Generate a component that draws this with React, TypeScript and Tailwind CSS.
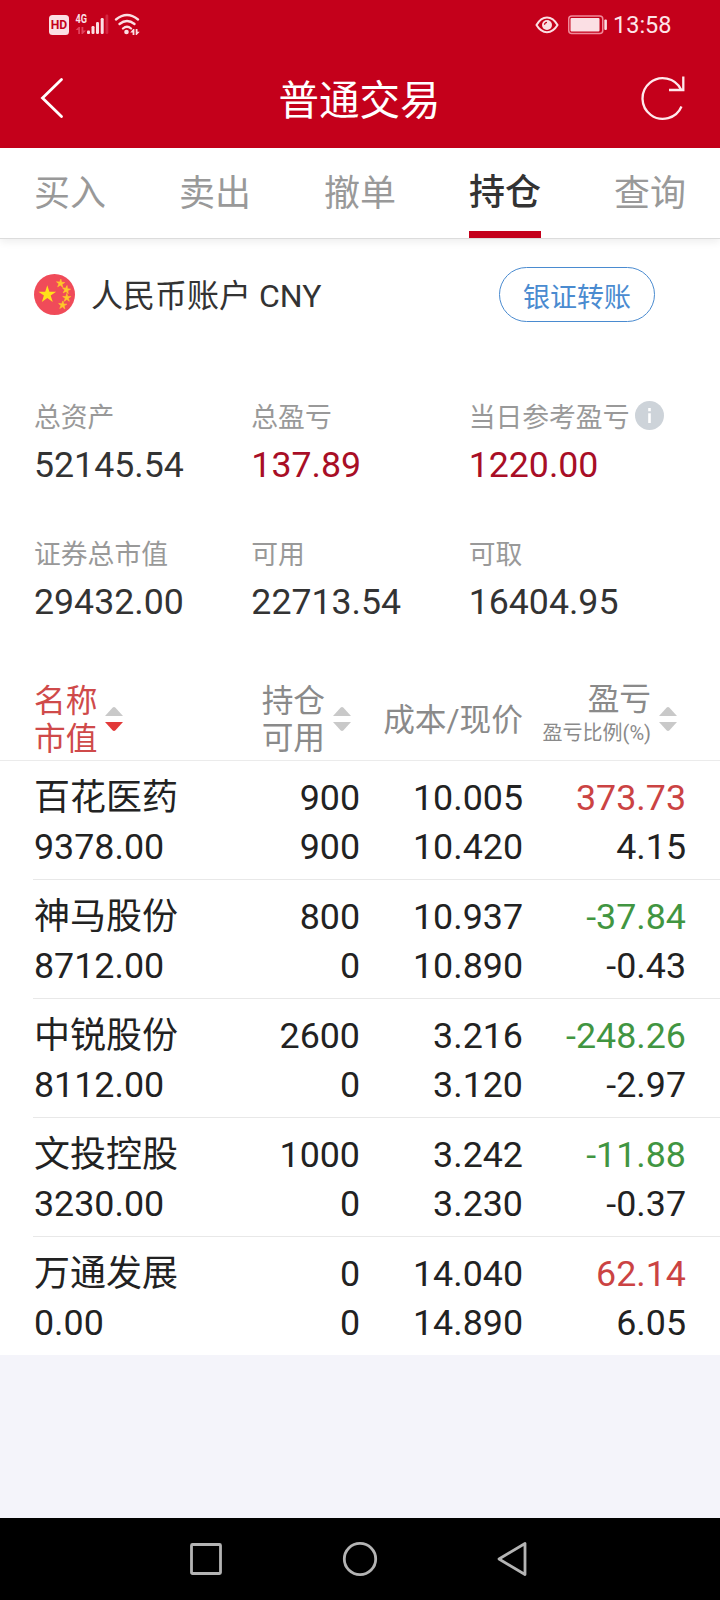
import React from "react";

type Sort = "none" | "desc";

const TABS = ["买入", "卖出", "撤单", "持仓", "查询"];

const SUMMARY = [
  { label: "总资产", value: "52145.54" },
  { label: "总盈亏", value: "137.89", red: true },
  { label: "当日参考盈亏", value: "1220.00", red: true, info: true },
  { label: "证券总市值", value: "29432.00" },
  { label: "可用", value: "22713.54" },
  { label: "可取", value: "16404.95" },
];

const HOLDINGS = [
  { name: "百花医药", market: "9378.00", held: "900", usable: "900", cost: "10.005", price: "10.420", profit: "373.73", ratio: "4.15" },
  { name: "神马股份", market: "8712.00", held: "800", usable: "0", cost: "10.937", price: "10.890", profit: "-37.84", ratio: "-0.43" },
  { name: "中锐股份", market: "8112.00", held: "2600", usable: "0", cost: "3.216", price: "3.120", profit: "-248.26", ratio: "-2.97" },
  { name: "文投控股", market: "3230.00", held: "1000", usable: "0", cost: "3.242", price: "3.230", profit: "-11.88", ratio: "-0.37" },
  { name: "万通发展", market: "0.00", held: "0", usable: "0", cost: "14.040", price: "14.890", profit: "62.14", ratio: "6.05" },
];

const COLUMNS = "grid grid-cols-[166px_160px_163px_163px] px-[34px]";

function StatusBar() {
  return (
    <div className="flex h-[48px] items-center pr-[49px] pl-[49px] text-[#fde4e8]">
      <svg width="92" height="24" viewBox="0 0 92 24" className="block">
        <rect x="0" y="3" width="20" height="20" rx="3.5" fill="#fbdfe4" />
        <text x="10" y="17.3" textAnchor="middle" fontSize="12.5" fontWeight="700" fill="#c4001b" textLength="16.500" lengthAdjust="spacingAndGlyphs" className="font-['Roboto',sans-serif]">HD</text>
        <text x="26.5" y="11" fontSize="12.500" fontWeight="700" fill="#fbdfe4" textLength="11.5" lengthAdjust="spacingAndGlyphs" className="font-['Roboto',sans-serif]">4G</text>
        <g fill="#e0405c">
          <path d="M29.200 15.500v6.500h1.800v-7h-1.400l-3 3h2.600zM32.500 15v7h1.200l3.300-3.400h-2.700v-3.600z" />
          <rect x="56.500" y="2.500" width="2.800" height="19.500" rx="1.200" opacity=".6" />
        </g>
        <g fill="#fbdfe4">
          <rect x="38" y="18.500" width="3" height="3.500" rx="1" />
          <rect x="42.500" y="14" width="3" height="8" rx="1.200" />
          <rect x="47" y="10" width="3" height="12" rx="1.200" />
          <rect x="51.700" y="6" width="3" height="16" rx="1.200" />
        </g>
        <g fill="none" stroke="#fbdfe4" strokeWidth="2.300" strokeLinecap="round">
          <path d="M67 7.500q11-9 22 0M70.500 12q7.500-6 15 0M74 16.500q4-3.500 8 0" />
        </g>
        <circle cx="77.500" cy="20" r="2.300" fill="#fbdfe4" />
        <path d="M85.400 17v6h-1.800v-2.500h-2.400l3-3.500zM86.700 17v6h1l3-3.200h-2.200V17z" fill="#fbdfe4" />
      </svg>
      <div className="flex-1" />
      <svg width="24" height="20" viewBox="0 0 24 20" className="mt-[2px] block">
        <path d="M1.500 10C7-.1 17-.1 22.500 10 17 19.500 7 19.500 1.500 10z" fill="none" stroke="#fbdfe4" strokeWidth="2" />
        <circle cx="12" cy="10" r="5" fill="#fbdfe4" />
        <path d="M9.500 9.800q.1-2.300 2.500-2.500" fill="none" stroke="#c4001b" strokeWidth="1.200" />
      </svg>
      <svg width="40" height="20" viewBox="0 0 40 20" className="mt-[1px] ml-[9px] block">
        <rect x="0.750" y="1" width="34" height="17.500" rx="3" fill="none" stroke="#f08a9a" strokeWidth="1.500" />
        <rect x="2.500" y="3" width="29" height="13.500" rx="1" fill="#fbdfe4" />
        <rect x="36.300" y="4.500" width="2.600" height="10.500" rx="1" fill="#fbdfe4" />
      </svg>
      <span className="mt-[2px] ml-[5px] w-[58px] text-[23.500px] leading-[30px]">13:58</span>
    </div>
  );
}

function Flag() {
  const star = "0,-1 .2245,-.309 .9511,-.309 .3633,.118 .5878,.809 0,.382 -.5878,.809 -.3633,.118 -.9511,-.309 -.2245,-.309";
  return (
    <svg width="41" height="41" viewBox="0 0 41 41" className="block">
      <circle cx="20.500" cy="20.500" r="20.500" fill="#f04b59" />
      <g fill="#ffe11a">
        <polygon points={star} transform="translate(13.300 20.500) scale(9.300)" />
        <g fill="#fdc82a" stroke="#fdc82a" strokeWidth=".15">
          <polygon points={star} transform="translate(26.500 9.500) rotate(5) scale(4.300)" />
          <polygon points={star} transform="translate(32.300 15.800) rotate(10) scale(4.300)" />
          <polygon points={star} transform="translate(32.800 23.800) scale(4.300)" />
          <polygon points={star} transform="translate(28.600 31.200) rotate(5) scale(4.300)" />
        </g>
      </g>
    </svg>
  );
}

function SortArrows({ sort = "none" }: { sort?: Sort }) {
  return (
    <svg width="18" height="24" viewBox="0 0 18 24" className="block shrink-0">
      <path d="M0 9L7.500 .8q1.500-1.400 3 0L18 9z" fill="#c9c9c9" />
      <path d="M0 15L7.500 23.200q1.500 1.400 3 0L18 15z" fill={sort === "desc" ? "#e23a3a" : "#c9c9c9"} />
    </svg>
  );
}

export default function App() {
  return (
    <div className="flex h-[1600px] w-[720px] flex-col overflow-hidden bg-[#f4f4fa] font-['Roboto','Noto_Sans_CJK_SC',sans-serif] text-[#333]">
      <header className="h-[148px] shrink-0 bg-[#c4001b] text-white">
        <StatusBar />
        <div className="flex h-[100px] items-center pr-[34px] pl-[40px]">
          <svg width="42" height="42" viewBox="0 0 42 42" fill="none" stroke="white" strokeWidth="2.800" strokeLinecap="round" className="block">
            <path d="M21.500 2.500L2.500 21l19 18.500" />
          </svg>
          <h1 className="flex-1 pt-[6px] text-center text-[40.500px] leading-[60px]">
            <span className="mr-[3px]">普通交易</span>
          </h1>
          <svg width="46" height="46" viewBox="0 0 46 46" fill="none" stroke="#ffe9ed" strokeWidth="2.300" className="block">
            <path d="M41.500 31.500A20.300 20.300 0 1 1 41 14.500" />
            <path d="M43.300 1.500V15H29" />
          </svg>
        </div>
      </header>

      <nav className="z-10 flex h-[91px] shrink-0 justify-between border-b border-[#dcdcdc] bg-white px-[34px] text-[36px] text-[#999] shadow-[0_3px_8px_rgba(0,0,0,0.07)]">
        {TABS.map((tab) => (
          <div
            key={tab}
            className={
              tab === "持仓"
                ? "h-[90px] border-b-[7px] border-[#c4001b] font-medium leading-[90px] text-[#333]"
                : "leading-[92px]"
            }
          >
            {tab}
          </div>
        ))}
      </nav>

      <main className="shrink-0 bg-white">
        <section className="flex h-[110px] items-center pr-[65px] pl-[34px]">
          <Flag />
          <span className="ml-[16px] pt-[4px] text-[32px] leading-[48px]">人民币账户 CNY</span>
          <button className="ml-auto h-[55px] w-[156px] rounded-full border border-[#4a8bd0] pt-[4px] text-[27px] leading-[53px] text-[#4a8bd0]">
            银证转账
          </button>
        </section>

        <section className="grid h-[319px] grid-cols-3 content-start px-[34px] pt-[46px]">
          {SUMMARY.map((item) => (
            <div key={item.label} className="h-[137px]">
              <div className="flex h-[40px] items-center text-[26.800px] leading-[40px] whitespace-nowrap text-[#999]">
                <span className="pt-[5px]">{item.label}</span>
                {item.info && (
                  <svg width="29" height="29" viewBox="0 0 29 29" className="ml-[6px] block">
                    <circle cx="14.500" cy="14.500" r="14.500" fill="#cdd3d9" />
                    <path d="M14.500 7v3.200M14.500 12.300v9.700" stroke="white" strokeWidth="2.600" />
                  </svg>
                )}
              </div>
              <div className={item.red ? "pt-[6px] text-[35.700px] leading-[48px] text-[#a80e26]" : "pt-[6px] text-[35.700px] leading-[48px]"}>
                {item.value}
              </div>
            </div>
          ))}
        </section>

        <section className={`${COLUMNS} h-[93px] border-b border-[#ebebeb] text-[31.700px] text-[#8a8a8a]`}>
          <div className="flex h-[101px] items-center">
            <div className="pt-[4px] leading-[38px] text-[#cf4a4a]">
              名称
              <br />
              市值
            </div>
            <div className="ml-[8px]">
              <SortArrows sort="desc" />
            </div>
          </div>
          <div className="flex h-[101px] items-center justify-end gap-[8px] pr-[9px]">
            <div className="pt-[3px] text-right leading-[37px]">
              持仓
              <br />
              可用
            </div>
            <SortArrows />
          </div>
          <div className="h-[105px] text-right leading-[105px] whitespace-nowrap">成本/现价</div>
          <div className="flex h-[101px] items-center justify-end gap-[8px] pr-[9px]">
            <div className="pb-[10px] text-right whitespace-nowrap">
              <div className="leading-[38px]">盈亏</div>
              <div className="text-[20px] leading-[28px]">盈亏比例(%)</div>
            </div>
            <SortArrows />
          </div>
        </section>

        {HOLDINGS.map((row, i) => (
          <section key={row.name}>
            <div className={`${COLUMNS} h-[118px] pt-[13px] text-[35.800px] leading-[49px] text-[#222]`}>
              <div>
                <div className="text-[36px]">{row.name}</div>
                <div>{row.market}</div>
              </div>
              <div className="text-right">
                <div>{row.held}</div>
                <div>{row.usable}</div>
              </div>
              <div className="text-right">
                <div>{row.cost}</div>
                <div>{row.price}</div>
              </div>
              <div className="text-right">
                <div className={row.profit.startsWith("-") ? "text-[#419541]" : "text-[#cb4343]"}>{row.profit}</div>
                <div>{row.ratio}</div>
              </div>
            </div>
            {i < HOLDINGS.length - 1 && <div className="ml-[33px] h-px bg-[#e8e8e8]" />}
          </section>
        ))}
      </main>

      <footer className="mt-auto flex h-[82px] shrink-0 items-center justify-center gap-[119px] bg-black">
        <svg width="34" height="36" viewBox="0 0 34 36" fill="none" stroke="#b4b4b4" strokeWidth="2.800">
          <rect x="2.500" y="3.500" width="29" height="29" rx="1" />
        </svg>
        <svg width="36" height="36" viewBox="0 0 36 36" fill="none" stroke="#b4b4b4" strokeWidth="2.800">
          <circle cx="18" cy="18" r="15.700" />
        </svg>
        <svg width="34" height="36" viewBox="0 0 34 36" fill="none" stroke="#b4b4b4" strokeWidth="2.800" strokeLinejoin="round">
          <path d="M28 2.500v31L2 18z" />
        </svg>
      </footer>
    </div>
  );
}
